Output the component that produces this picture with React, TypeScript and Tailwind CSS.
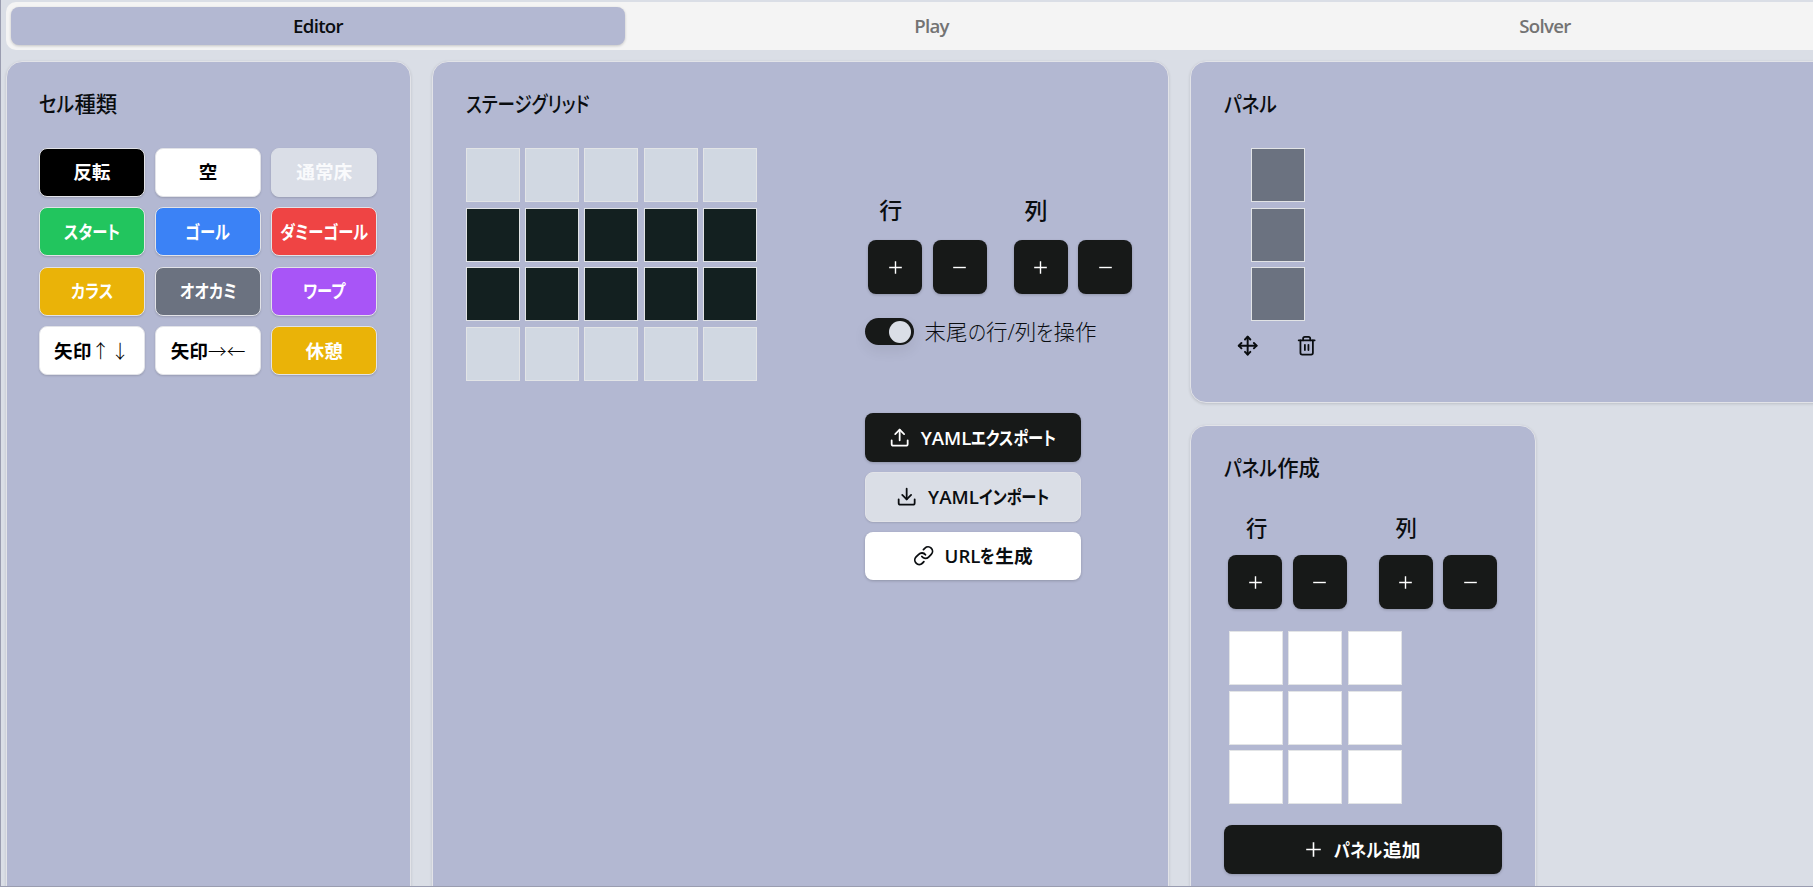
import React from "react";
import { Move, Trash2, Upload, Download, Link } from "lucide-react";

const card =
  "border border-[#e2e3e8] bg-[#b3b8d2] rounded-2xl shadow-[0_1px_3px_rgba(0,0,0,0.14)] shrink-0";
const title = "block whitespace-nowrap text-[21.33px] leading-[21px] font-medium text-[#0a0d10] -mt-px pb-px";

type CellType = { label: string; look: string };

const cellTypes: CellType[] = [
  { label: "反転", look: "border-[#e2e3e8] bg-black text-white" },
  { label: "空", look: "border-[#e2e3e8] bg-white text-black" },
  { label: "通常床", look: "border-[#dadee7] bg-[#dadee7] text-[#f9fafc]" },
  { label: "スタート", look: "border-[#e2e3e8] bg-[#22c55e] text-white" },
  { label: "ゴール", look: "border-[#e2e3e8] bg-[#3b82f6] text-white" },
  { label: "ダミーゴール", look: "border-[#e2e3e8] bg-[#ef4444] text-white" },
  { label: "カラス", look: "border-[#e2e3e8] bg-[#eab308] text-white" },
  { label: "オオカミ", look: "border-[#e2e3e8] bg-[#6b7280] text-white" },
  { label: "ワープ", look: "border-[#e2e3e8] bg-[#a855f7] text-white" },
  { label: "矢印↑ ↓", look: "border-[#e2e3e8] bg-white text-black" },
  { label: "矢印→←", look: "border-[#e2e3e8] bg-white text-black" },
  { label: "休憩", look: "border-[#e2e3e8] bg-[#eab308] text-white" },
];

const stage = ["floor", "flip", "flip", "floor"];

/** Sets kana runs in a condensed width and arrows in a light weight. */
function Label({ text, wide }: { text: string; wide?: boolean }) {
  const runs = text.match(/[\u3040-\u30ff]+|[↑↓→← ]+|[^\u3040-\u30ff↑↓→← ]+/g) ?? [];
  return (
    <span className="whitespace-nowrap">
      {runs.map((run, i) => {
        if (/^[\u3040-\u30ff]/.test(run)) {
          return (
            <span
              key={i}
              className={`inline-block origin-left ${wide ? "scale-x-[0.87]" : "scale-x-[0.82]"}`}
              style={{ marginRight: `${(wide ? -0.115 : -0.165) * run.length}em` }}
            >
              {run}
            </span>
          );
        }
        if (/^[↑↓→← ]/.test(run)) {
          return (
            <span key={i} className="font-light [word-spacing:-4px]">
              {run}
            </span>
          );
        }
        return <React.Fragment key={i}>{run}</React.Fragment>;
      })}
    </span>
  );
}

function PlusGlyph({ size }: { size: number }) {
  return (
    <svg width={size} height={size} viewBox="0 0 14 14" stroke="currentColor" strokeWidth="1.5" fill="none">
      <path d="M7 0.2V13.8M0.2 7H13.8" />
    </svg>
  );
}

function StepButton({ minus }: { minus?: boolean }) {
  return (
    <button className="flex size-[54px] items-center justify-center rounded-lg bg-[#171918] text-white shadow-[0_1px_3px_rgba(0,0,0,0.2)]">
      {minus ? (
        <svg width="13" height="13" viewBox="0 0 14 14" stroke="currentColor" strokeWidth="1.5">
          <path d="M0.2 7H13.8" />
        </svg>
      ) : (
        <PlusGlyph size={13} />
      )}
    </button>
  );
}

function Stepper({ label, labelClass }: { label: string; labelClass: string }) {
  return (
    <div>
      <div className={`leading-[32px] font-medium ${labelClass}`}>{label}</div>
      <div className="flex gap-[10.6px]">
        <StepButton />
        <StepButton minus />
      </div>
    </div>
  );
}

export default function App() {
  return (
    <div className="h-[887px] w-[1813px] overflow-hidden border-b border-l border-[#9a9db0] bg-[#dadee6] pt-[2px] pl-[5px] font-['Open_Sans','Noto_Sans_CJK_JP',sans-serif] text-[#0a0d10] [font-feature-settings:'palt']">
      <div className="flex h-12 w-[1852px] items-center rounded-[10px] bg-[#f4f4f4] pb-px pl-[5px] text-[18.67px] font-semibold tracking-[-0.7px] text-[#737373]">
        <div className="flex h-[38px] w-[614px] items-center justify-center rounded-lg bg-[#b3b8d2] text-[#0a0d10] shadow-[0_1px_3px_rgba(0,0,0,0.2)]">
          Editor
        </div>
        <div className="flex w-[613px] justify-center">Play</div>
        <div className="flex w-[614px] justify-center">Solver</div>
      </div>

      <div className="mt-[11px] flex h-[900px] w-[1900px] gap-[21px]">
        <section className={`${card} w-[405px] pt-8 pr-[33px] pl-8`}>
          <h2 className={title}>
            <Label wide text="セル種類" />
          </h2>
          <div className="mt-[33px] grid grid-cols-3 gap-x-[10.67px] gap-y-[10.67px]">
            {cellTypes.map((c) => (
              <button
                key={c.label}
                className={`flex h-[48.8px] items-center justify-center rounded-lg border text-[18.67px] font-semibold whitespace-nowrap shadow-[0_1px_2px_rgba(0,0,0,0.15)] ${c.look}`}
              >
                <Label text={c.label} />
              </button>
            ))}
          </div>
        </section>

        <section className={`${card} w-[737px] pt-8 pl-[32.6px]`}>
          <h2 className={title}>
            <Label text="ステージグリッド" />
          </h2>
          <div className="flex">
            <div className="mt-[33px] grid h-[240px] w-[399px] grid-cols-[repeat(5,54px)] grid-rows-[repeat(4,54px)] gap-x-[5.33px] gap-y-[5.5px]">
              {stage.flatMap((kind, r) =>
                Array.from({ length: 5 }, (_, c) => (
                  <div
                    key={`${r}-${c}`}
                    className={`border border-[#e2e4e6] ${kind === "flip" ? "bg-[#132020]" : "bg-[#d1d8e2]"}`}
                  />
                )),
              )}
            </div>
            <div className="pt-[79px]">
              <div className="flex gap-[26.8px] pl-[3.6px]">
                <Stepper label="行" labelClass="pl-[11px] pb-[14px] text-[23px]" />
                <Stepper label="列" labelClass="pl-[11px] pb-[14px] text-[23px]" />
              </div>
              <div className="mt-6 flex h-[27px] items-center">
                <div className="flex h-[27px] w-[49px] items-center justify-end rounded-full bg-[#171918] pr-[3px] shadow-[0_6px_14px_rgba(0,0,0,0.07)]">
                  <span className="size-[22px] rounded-full bg-[#dadee6]" />
                </div>
                <span className="ml-[11px] pt-[2px] text-[21.5px] font-light">
                  <Label wide text="末尾の行/列を操作" />
                </span>
              </div>
              <div className="mt-[68px] flex w-[216px] flex-col gap-[10.3px] text-[18.67px] font-semibold">
                <button className="flex h-[49px] items-center justify-center gap-[10.67px] rounded-lg bg-[#171918] text-white shadow-[0_1px_3px_rgba(0,0,0,0.2)]">
                  <Upload size={21.33} strokeWidth={2} />
                  <Label text="YAMLエクスポート" />
                </button>
                <button className="flex h-[49.4px] items-center justify-center gap-[10.67px] rounded-lg border border-[#e2e3e8] bg-[#dadee6] shadow-[0_1px_2px_rgba(0,0,0,0.12)]">
                  <Download size={21.33} strokeWidth={2} />
                  <Label text="YAMLインポート" />
                </button>
                <button className="flex h-[48.3px] items-center justify-center gap-[10.67px] rounded-lg bg-white shadow-[0_1px_3px_rgba(0,0,0,0.2)]">
                  <Link size={21.33} strokeWidth={2} />
                  <Label text="URLを生成" />
                </button>
              </div>
            </div>
          </div>
        </section>

        <div className="flex w-[700px] flex-col items-start gap-[22px]">
          <section className={`${card} h-[342px] w-[700px] pt-8 pl-[33px]`}>
            <h2 className={title}>
              <Label wide text="パネル" />
            </h2>
            <div className="mt-[33px] ml-[27px] grid grid-rows-[repeat(3,54px)] gap-y-[5.5px]">
              {[0, 1, 2].map((i) => (
                <div key={i} className="w-[54px] border border-[#e2e4e6] bg-[#6b7280]" />
              ))}
            </div>
            <div className="mt-[14px] ml-[12.6px] flex gap-[38px]">
              <Move size={21.33} strokeWidth={2.2} />
              <Trash2 size={21.33} strokeWidth={2} />
            </div>
          </section>

          <section className={`${card} h-[520px] w-[346px] px-[33px] pt-8`}>
            <h2 className={title}>
              <Label wide text="パネル作成" />
            </h2>
            <div className="mt-[33px] flex gap-[32px] pl-[4px]">
              <Stepper label="行" labelClass="pl-[18px] pb-[11px] text-[21.33px]" />
              <Stepper label="列" labelClass="pl-[17px] pb-[11px] text-[21.33px]" />
            </div>
            <div className="mt-[22px] ml-[4.6px] grid grid-cols-[repeat(3,54px)] grid-rows-[repeat(3,54px)] gap-[5.5px]">
              {Array.from({ length: 9 }, (_, i) => (
                <div key={i} className="border border-[#e2e4e6] bg-white" />
              ))}
            </div>
            <button className="mt-[21px] flex h-[49px] w-[278px] items-center justify-center gap-[13.5px] rounded-lg bg-[#171918] text-[18.67px] font-semibold text-white shadow-[0_1px_3px_rgba(0,0,0,0.2)]">
              <PlusGlyph size={15} />
              <Label wide text="パネル追加" />
            </button>
          </section>
        </div>
      </div>
    </div>
  );
}
